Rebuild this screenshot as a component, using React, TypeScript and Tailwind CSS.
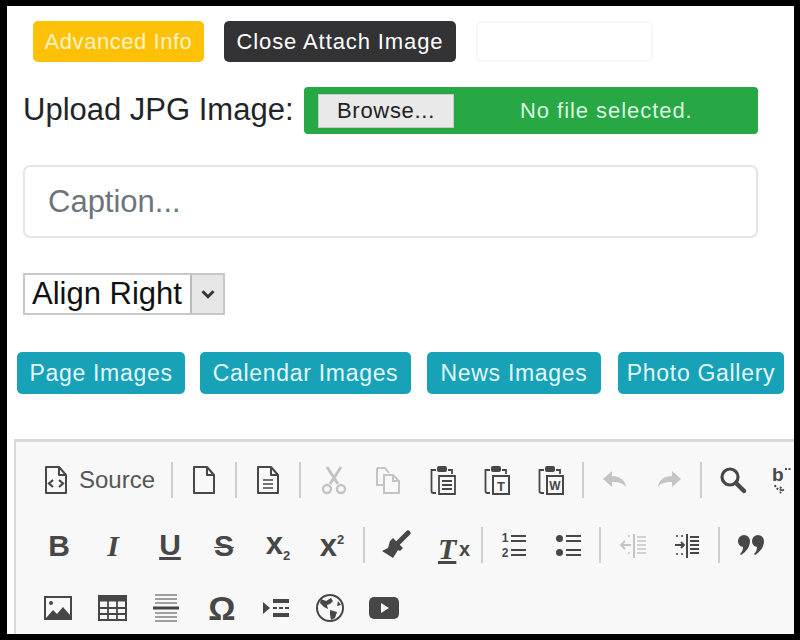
import type { ReactNode } from "react";

const font = "font-['Liberation_Sans',Arial,sans-serif]";

function Icon({ children, color = "text-[#474747]" }: { children: ReactNode; color?: string }) {
  return (
    <svg viewBox="0 0 30 30" width="30" height="30" fill="none" stroke="currentColor" strokeWidth="2" className={color}>
      {children}
    </svg>
  );
}

function Sep() {
  return <div className="mx-[4px] h-[36px] w-[2px] shrink-0 bg-[#cfcfcf]" />;
}

function Slot({ children, className = "" }: { children: ReactNode; className?: string }) {
  return <div className={`flex h-[40px] w-[54px] shrink-0 items-center justify-center ${className}`}>{children}</div>;
}

const Doc = () => <path d="M5 2h13l7 8v18H5z M18 2v8h7" strokeLinejoin="round" />;

function Clipboard({ children }: { children: ReactNode }) {
  return (
    <Icon>
      <path d="M8 5H3.5v21a2 2 0 0 0 2 2H8 M20 5h4v4" strokeWidth="1.8" />
      <rect x="9" y="1" width="10" height="6" rx="2" fill="currentColor" stroke="none" />
      {children}
    </Icon>
  );
}

export default function App() {
  const off = "text-[#c4c4c4]";
  return (
    <div className={`h-[640px] w-[800px] overflow-hidden bg-black pb-[6px] pl-[7px] pr-[6px] pt-[6px] ${font}`}>
      <div className="h-[628px] w-[787px] overflow-hidden bg-white">
        <div className="flex gap-[20px] pl-[26px] pt-[15px]">
          <button className="h-[41px] w-[171px] rounded-[5px] bg-[#ffc107] text-[22px] tracking-[0.55px] text-[#fff3c4]">Advanced Info</button>
          <button className="h-[41px] w-[232px] rounded-[5px] bg-[#333336] text-[22px] tracking-[0.9px] text-white">Close Attach Image</button>
          <button className="h-[41px] w-[177px] rounded-[5px] border-2 border-[#f7f7f7] bg-white" />
        </div>

        <div className="mt-[25px] flex items-center pl-[16px]">
          <label className="w-[281px] text-[31px] text-[#212529]">Upload JPG Image:</label>
          <div className="flex h-[47px] w-[454px] items-center rounded-[4px] bg-[#28a745] pl-[14px]">
            <div className="flex h-[34px] w-[136px] items-center justify-center border border-[#c8c8c8] bg-[#e9e9e9] text-[22px] tracking-[0.7px] text-[#222]">Browse...</div>
            <span className="ml-[66px] text-[22px] tracking-[0.95px] text-[#d9f7e0]">No file selected.</span>
          </div>
        </div>

        <div className="ml-[16px] mt-[31px] w-[735px]">
          <input
            placeholder="Caption..."
            className="h-[73px] w-full rounded-[7px] border-2 border-[#e3e5e8] bg-white px-[23px] text-[31px] text-[#495057] placeholder:text-[#6c757d]"
          />
        </div>

        <div className="ml-[16px] mt-[35px] flex h-[42px] w-[202px] items-center justify-between border-2 border-[#c8c8c8] bg-white">
          <span className="pl-[7px] text-[31px] text-[#111]">Align Right</span>
          <div className="flex h-full w-[33px] items-center justify-center border-l-2 border-[#bbb] bg-[#e6e6e6]">
            <svg viewBox="0 0 14 10" width="16" height="11" fill="none" stroke="#333" strokeWidth="2.6"><path d="M2 2l5 5 5-5" /></svg>
          </div>
        </div>

        <div className="mt-[37px] flex pl-[10px] text-[23px] tracking-[0.7px] text-[#e3f7fa]">
          <button className="h-[42px] w-[168px] rounded-[5px] bg-[#17a2b8]">Page Images</button>
          <button className="ml-[15px] h-[42px] w-[211px] rounded-[5px] bg-[#17a2b8]">Calendar Images</button>
          <button className="ml-[16px] h-[42px] w-[174px] rounded-[5px] bg-[#17a2b8]">News Images</button>
          <button className="ml-[17px] h-[42px] w-[166px] rounded-[5px] bg-[#17a2b8]">Photo Gallery</button>
        </div>

        <div className="ml-[7px] mt-[45px] h-[200px] w-[780px] border-l-[2px] border-t-[3px] border-[#d8d8d8] bg-[#f8f8f8]">
          <div className="flex items-center pl-[14px] pt-[18px]">
            <div className="flex h-[40px] w-[137px] shrink-0 items-center pl-[11px]">
              <Icon>
                <Doc />
                <path d="M12 15l-4 3.5 4 3.5M18 15l4 3.5-4 3.5" strokeWidth="2.2" />
              </Icon>
              <span className="ml-[8px] text-[24px] text-[#555]">Source</span>
            </div>
            <Sep />
            <Slot><Icon><Doc /></Icon></Slot>
            <Sep />
            <Slot>
              <Icon>
                <Doc />
                <path d="M10 15h10M10 19h10M10 23h10" strokeWidth="1.6" />
              </Icon>
            </Slot>
            <Sep />
            <Slot className="ml-[2px]">
              <Icon color={off}>
                <path d="M8 2l11 17M22 2L11 19" strokeWidth="3" />
                <circle cx="8" cy="24" r="4" strokeWidth="2.4" />
                <circle cx="22" cy="24" r="4" strokeWidth="2.4" />
              </Icon>
            </Slot>
            <Slot>
              <Icon color={off}>
                <path d="M4 3h8l4 5M4 3v17h6" />
                <path d="M11 10h9l6 6v12H11z M20 10v6h6" />
              </Icon>
            </Slot>
            <Slot className="ml-[1px]">
              <Clipboard>
                <path d="M11 11h16v18H11zM14 16h10M14 20h10M14 24h10" strokeWidth="1.8" />
              </Clipboard>
            </Slot>
            <Slot>
              <Clipboard>
                <rect x="11" y="11" width="16" height="18" />
                <text x="19" y="26" textAnchor="middle" fontSize="13" fontWeight="700" fill="currentColor" stroke="none">T</text>
              </Clipboard>
            </Slot>
            <Slot>
              <Clipboard>
                <rect x="11" y="11" width="16" height="18" />
                <text x="19" y="25" textAnchor="middle" fontSize="12" fontWeight="700" fill="currentColor" stroke="none">W</text>
              </Clipboard>
            </Slot>
            <Sep />
            <Slot>
              <Icon color={off}>
                <path d="M3 14l9-8v5c8 0 13 4 14 11-3-4-7-5-14-5v5z" fill="currentColor" stroke="none" />
              </Icon>
            </Slot>
            <Slot>
              <Icon color={off}>
                <path d="M27 14l-9-8v5C10 11 5 15 4 22c3-4 7-5 14-5v5z" fill="currentColor" stroke="none" />
              </Icon>
            </Slot>
            <Sep />
            <Slot>
              <Icon>
                <circle cx="12" cy="12" r="8" strokeWidth="3.2" />
                <path d="M18 18l8 8" strokeWidth="4.4" strokeLinecap="round" />
              </Icon>
            </Slot>
            <div className="flex h-[40px] shrink-0 items-center pl-[11px]">
              <svg viewBox="0 0 20 30" width="20" height="30" fill="none" stroke="#474747" strokeWidth="2">
                <text x="1" y="16" fontSize="19" fontWeight="700" fill="#474747" stroke="none">b</text>
                <path d="M4 20c1 4 4 5 8 5M9 22l3 3-3 3M14 4h6" strokeDasharray="2 1.5" />
              </svg>
            </div>
          </div>

          <div className="mt-[25px] flex items-center pl-[16px] text-[#474747]">
            <Slot><span className="text-[30px] font-bold">B</span></Slot>
            <Slot><span className="font-['Liberation_Serif',serif] text-[30px] font-bold italic">I</span></Slot>
            <Slot className="ml-[3px]"><span className="text-[30px] font-bold leading-none underline underline-offset-2">U</span></Slot>
            <Slot><span className="text-[30px] font-bold line-through decoration-1">S</span></Slot>
            <Slot>
              <span className="text-[31px] font-bold leading-none">x<span className="align-[-6px] text-[13px]">2</span></span>
            </Slot>
            <Slot>
              <span className="text-[31px] font-bold leading-none">x<span className="align-[12px] text-[13px]">2</span></span>
            </Slot>
            <Sep />
            <Slot>
              <Icon>
                <path d="M17 13L27 3" strokeWidth="5" strokeLinecap="round" />
                <path d="M12 8l10 10-3 3-2-1-5 8-11-7 6-3 2-7z" fill="currentColor" stroke="none" />
              </Icon>
            </Slot>
            <Slot>
              <div className="relative h-[30px] w-[30px]">
                <span className="absolute left-[3px] top-[-4px] font-['Liberation_Serif',serif] text-[30px] font-bold italic underline">T</span>
                <span className="absolute bottom-[-4px] right-[-5px] text-[20px] font-bold">x</span>
              </div>
            </Slot>
            <Sep />
            <Slot>
              <div className="flex items-center gap-[3px]">
                <div className="flex flex-col gap-[3px] text-[12px] font-bold leading-[12px]"><span>1</span><span>2</span></div>
                <div className="flex flex-col gap-[7px]">
                  <div className="h-[7px] w-[15px] border-y-2 border-[#474747]" />
                  <div className="h-[7px] w-[15px] border-y-2 border-[#474747]" />
                </div>
              </div>
            </Slot>
            <Slot>
              <div className="flex flex-col gap-[7px]">
                {[0, 1].map((i) => (
                  <div key={i} className="flex items-center gap-[3px]">
                    <div className="h-[7px] w-[7px] rounded-full bg-[#474747]" />
                    <div className="h-[7px] w-[15px] border-y-2 border-[#474747]" />
                  </div>
                ))}
              </div>
            </Slot>
            <Sep />
            <Slot className="ml-[1px]">
              <Icon color={off}>
                <path d="M16 4v24" />
                <path d="M19 7h9M19 11h9M19 15h9M19 19h9M19 23h9" strokeWidth="1.6" />
                <path d="M13 15H3M7 11l-4 4 4 4" strokeWidth="1.8" />
                <path d="M10 6h2M10 23h2" strokeWidth="1.6" />
              </Icon>
            </Slot>
            <Slot>
              <Icon>
                <path d="M15 4v24" />
                <path d="M18 7h9M18 11h9M18 15h9M18 19h9M18 23h9" strokeWidth="1.8" />
                <path d="M3 15h9M9 12l3 3-3 3" strokeWidth="1.8" />
                <path d="M4 6h2M9 6h2M4 24h2M9 24h2" strokeWidth="1.6" />
              </Icon>
            </Slot>
            <Sep />
            <Slot>
              <Icon>
                <path d="M2 11a6 6 0 0 1 12 0c0 6-4 11-9 14l-1-1c2-2 3-4 3-7a6 6 0 0 1-5-6zM16 11a6 6 0 0 1 12 0c0 6-4 11-9 14l-1-1c2-2 3-4 3-7a6 6 0 0 1-5-6z" fill="currentColor" stroke="none" />
              </Icon>
            </Slot>
          </div>

          <div className="mt-[23px] flex items-center pl-[15px] text-[#474747]">
            <Slot>
              <Icon>
                <rect x="2" y="4" width="26" height="22" strokeWidth="2" />
                <circle cx="8" cy="10" r="2" fill="currentColor" stroke="none" />
                <path d="M3 25l7-8 4 4 6-7 7 8v3z" fill="currentColor" stroke="none" />
              </Icon>
            </Slot>
            <Slot>
              <Icon>
                <rect x="2" y="3" width="27" height="24" strokeWidth="2" />
                <path d="M2 6h27" strokeWidth="5" />
                <path d="M2 15h27M2 21h27M11 8v19M20 8v19" strokeWidth="1.8" />
              </Icon>
            </Slot>
            <Slot>
              <Icon>
                <path d="M4 2h22M4 6h22M4 10h22M4 20h22M4 24h22M4 28h22" strokeWidth="1.2" />
                <path d="M2 15h26" strokeWidth="3" />
              </Icon>
            </Slot>
            <Slot className="ml-[2px]"><span className="text-[34px] font-bold">Ω</span></Slot>
            <Slot>
              <Icon>
                <path d="M2 9l7 6-7 6z" fill="currentColor" stroke="none" />
                <path d="M12 8h16M12 22h16" strokeWidth="4" />
                <path d="M12 15h16" strokeWidth="2" strokeDasharray="4 2" />
              </Icon>
            </Slot>
            <Slot>
              <Icon>
                <circle cx="15" cy="15" r="13" strokeWidth="2" />
                <path d="M6 6l5 2 5-3 2 3-3 3-3 1 1 4-4-2-4-4zM15 17l7 2-2 6-4 2-1-5zM23 8l3 4-4 1z" fill="currentColor" stroke="none" />
              </Icon>
            </Slot>
            <Slot>
              <Icon>
                <rect x="0" y="4" width="30" height="22" rx="5" fill="currentColor" stroke="none" />
                <path d="M12 10l8 5-8 5z" fill="#f8f8f8" stroke="none" />
              </Icon>
            </Slot>
          </div>
        </div>
      </div>
    </div>
  );
}
